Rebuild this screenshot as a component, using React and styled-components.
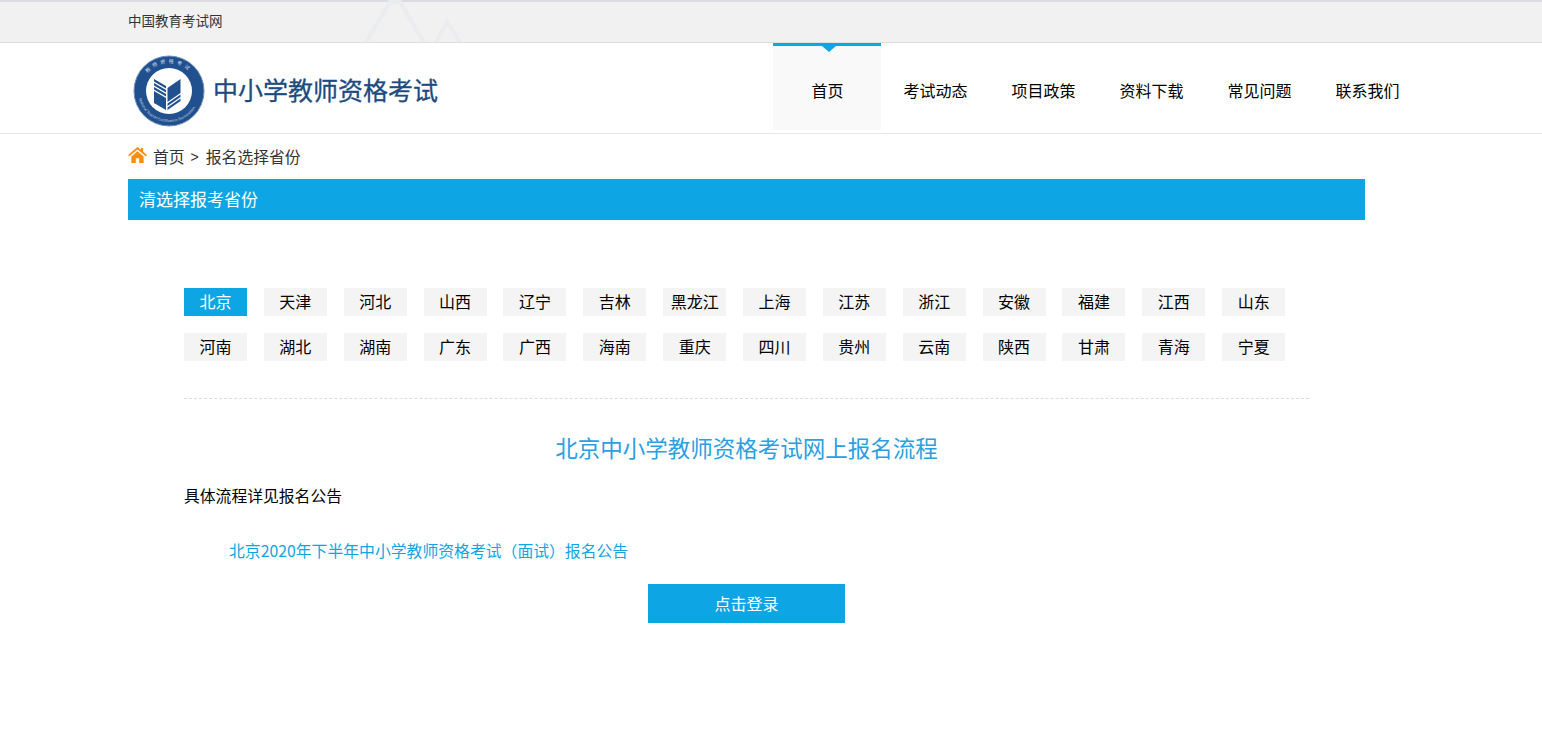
import React from 'react'
import styled, { createGlobalStyle } from 'styled-components'

const GlobalStyle = createGlobalStyle`
    html, body {
        margin: 0;
        padding: 0;
        background: #ffffff;
        font-family: "Noto Sans CJK SC", "Liberation Sans", sans-serif;
    }
`

const Page = styled.div`
    width: 1542px;
    height: 743px;
    overflow: hidden;
`

const TopBar = styled.div`
    position: relative;
    box-sizing: border-box;
    height: 43px;
    padding-left: 128px;
    background: #f1f1f2;
    border-top: 2px solid #dcdde2;
    border-bottom: 1px solid #dedede;
    font-size: 13.5px;
    line-height: 37px;
    color: #333333;
`

const Peaks = styled.svg`
    position: absolute;
    left: 340px;
    top: -2px;
`

const Header = styled.div`
    box-sizing: border-box;
    height: 91px;
    padding: 0 121px 0 128px;
    display: flex;
    justify-content: space-between;
    border-bottom: 1px solid #e6e6e6;
`

const Logo = styled.div`
    display: flex;
    align-items: center;
    gap: 8px;
    padding-left: 5px;
    height: 96px;
`

const LogoText = styled.span`
    font-size: 25px;
    font-weight: 400;
    line-height: 34px;
    color: #1c4b80;
    margin-top: -4px;
    -webkit-text-stroke: 0.3px #1c4b80;
`

const Nav = styled.div`
    display: flex;
    height: 87px;
`

const NavItem = styled.div`
    position: relative;
    box-sizing: border-box;
    width: 108px;
    height: 87px;
    display: flex;
    align-items: center;
    justify-content: center;
    font-size: 16px;
    color: #000000;
    padding: 4px 0 0 1px;
    background: ${(p) => (p.$active ? '#f9f9f9' : 'transparent')};
    border-top: 3px solid ${(p) => (p.$active ? '#0ea5e4' : 'transparent')};

    &::after {
        content: "";
        display: ${(p) => (p.$active ? 'block' : 'none')};
        position: absolute;
        left: 49px;
        top: 0;
        border-left: 7px solid transparent;
        border-right: 7px solid transparent;
        border-top: 6px solid #0ea5e4;
    }
`

const Main = styled.div`
    width: 1237px;
    margin-left: 128px;
`

const Crumbs = styled.div`
    height: 45px;
    display: flex;
    align-items: center;
    font-size: 15.8px;
    line-height: 43px;
    color: #333333;
`

const CrumbIcon = styled.svg`
    margin-top: -4px;
`

const CrumbHome = styled.span`
    margin-left: 6px;
`

const CrumbArrow = styled.span`
    margin: 2px 7px 0 6px;
    font-size: 14px;
    font-family: "Liberation Sans", sans-serif;
`

const TitleBar = styled.div`
    box-sizing: border-box;
    height: 41px;
    padding-left: 11px;
    background: #0ea5e4;
    color: #ffffff;
    font-size: 17px;
    line-height: 40px;
`

const Content = styled.div`
    width: 1125px;
    margin-left: 56px;
    padding-top: 68px;
`

const Provinces = styled.div`
    display: flex;
    flex-wrap: wrap;
    gap: 17px 16.87px;
    padding-bottom: 37px;
    border-bottom: 1px dashed #dddddd;
`

const Province = styled.div`
    width: 63px;
    height: 28px;
    text-align: center;
    font-size: 16px;
    line-height: 26px;
    background: ${(p) => (p.$active ? '#0ea5e4' : '#f4f4f4')};
    color: ${(p) => (p.$active ? '#ffffff' : '#000000')};
`

const FlowTitle = styled.div`
    margin-top: 31px;
    text-align: center;
    font-size: 22.5px;
    line-height: 34px;
    color: #2a9fe2;
`

const FlowNote = styled.div`
    margin-top: 20px;
    font-size: 15.8px;
    line-height: 24px;
    color: #000000;
`

const Notice = styled.a`
    display: block;
    margin-top: 31px;
    padding-left: 45px;
    font-size: 15.84px;
    line-height: 24px;
    color: #0ea5e4;
`

const LoginButton = styled.button`
    display: block;
    width: 197px;
    height: 39px;
    margin: 21px auto 0;
    padding: 0 0 2px;
    border: none;
    background: #0ea5e4;
    color: #ffffff;
    font-family: inherit;
    font-size: 16px;
`

const row1 = ['北京', '天津', '河北', '山西', '辽宁', '吉林', '黑龙江', '上海', '江苏', '浙江', '安徽', '福建', '江西', '山东']
const row2 = ['河南', '湖北', '湖南', '广东', '广西', '海南', '重庆', '四川', '贵州', '云南', '陕西', '甘肃', '青海', '宁夏']
const navs = ['首页', '考试动态', '项目政策', '资料下载', '常见问题', '联系我们']

const Emblem = () => (
    <svg width="72" height="72" viewBox="0 0 72 72">
        <defs>
            <path id="ringTop" d="M8 36a28 28 0 0 1 56 0" />
            <path id="ringBottom" d="M5 36a31 31 0 0 0 62 0" />
        </defs>
        <circle cx="36" cy="36" r="35" fill="#21508f" stroke="#6f8fb8" strokeWidth="1" />
        <circle cx="36" cy="36" r="23" fill="#ffffff" />
        <text fontSize="5" fill="#d5deea" letterSpacing="3">
            <textPath href="#ringTop" startOffset="22%">教师资格考试</textPath>
        </text>
        <text fontSize="3.6" fill="#c5d2e3">
            <textPath href="#ringBottom" startOffset="8%">National Teacher Certification Examination</textPath>
        </text>
        <g fill="#21508f">
            <path d="M34.5 33 L47.5 24 V38 L34.5 47 Z" />
            <path d="M34.5 48.5 L47.5 39.5 V42 L34.5 51 Z" />
            <path d="M34.5 52.5 L47.5 43.5 V46 L34.5 55 Z" />
            <path d="M21 24 L33 31 V33.5 L21 26.5 Z" />
            <path d="M21 28 L33 35 V37.5 L21 30.5 Z" />
            <path d="M21 32 L33 39 V41.5 L21 34.5 Z" />
            <path d="M21 36 L33 43 V55 L21 48 Z" />
        </g>
    </svg>
)

const HomeIcon = () => (
    <CrumbIcon width="19" height="16" viewBox="0 0 20 17">
        <path d="M10 0 L13.6 3 V1 H16 V5 L20 8.4 L18.8 9.8 L10 2.6 L1.2 9.8 L0 8.4 Z" fill="#ff8c0f" />
        <path d="M3.5 10 L10 4.6 L16.5 10 V17 H11.8 V12 H8.2 V17 H3.5 Z" fill="#ff8c0f" />
    </CrumbIcon>
)

const App = () => {
    return (
        <Page>
            <GlobalStyle />
            <TopBar>
                中国教育考试网
                <Peaks width="140" height="42" viewBox="0 0 140 42" fill="none" stroke="#ebecef" strokeWidth="4">
                    <path d="M26 42 L50 2 H60 L84 42" />
                    <path d="M96 42 L107 22 L120 42" />
                </Peaks>
            </TopBar>
            <Header>
                <Logo>
                    <Emblem />
                    <LogoText>中小学教师资格考试</LogoText>
                </Logo>
                <Nav>
                    {navs.map((n, i) => (
                        <NavItem key={n} $active={i === 0}>{n}</NavItem>
                    ))}
                </Nav>
            </Header>
            <Main>
                <Crumbs>
                    <HomeIcon />
                    <CrumbHome>首页</CrumbHome>
                    <CrumbArrow>&gt;</CrumbArrow>
                    <span>报名选择省份</span>
                </Crumbs>
                <TitleBar>清选择报考省份</TitleBar>
                <Content>
                    <Provinces>
                        {row1.concat(row2).map((p, i) => (
                            <Province key={p} $active={i === 0}>{p}</Province>
                        ))}
                    </Provinces>
                    <FlowTitle>北京中小学教师资格考试网上报名流程</FlowTitle>
                    <FlowNote>具体流程详见报名公告</FlowNote>
                    <Notice>北京2020年下半年中小学教师资格考试（面试）报名公告</Notice>
                    <LoginButton>点击登录</LoginButton>
                </Content>
            </Main>
        </Page>
    )
}

export default App
